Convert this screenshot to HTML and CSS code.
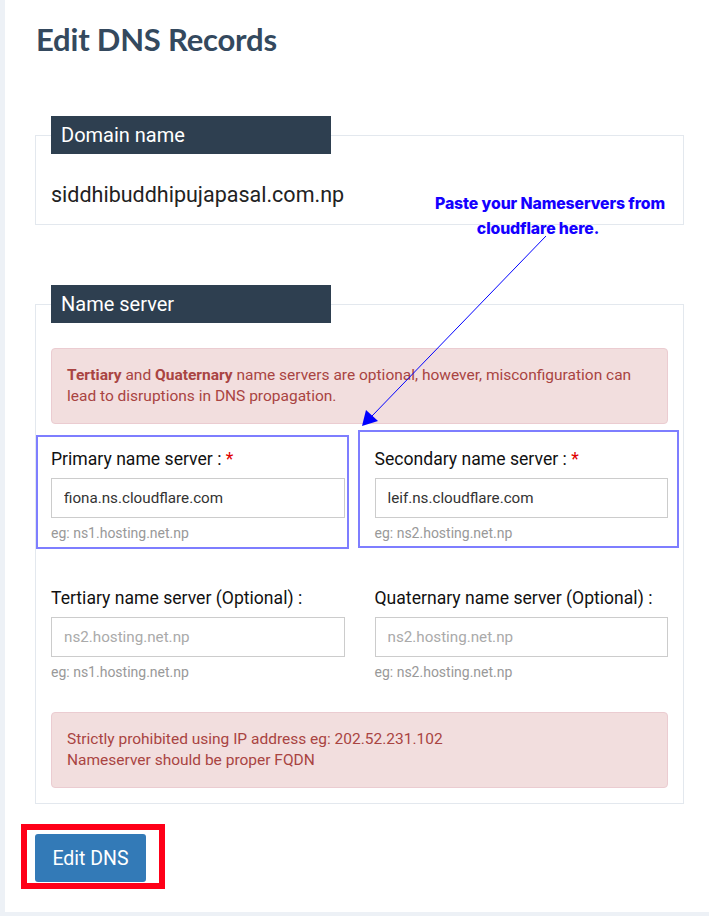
FILE: index.html
```html
<!DOCTYPE html>
<html lang="en">
<head>
<meta charset="utf-8">
<title>Edit DNS Records</title>
<link rel="stylesheet" href="styles.css">
</head>
<body>
<div class="page">
  <h1 class="title">Edit DNS Records</h1>

  <fieldset class="box box-domain">
    <legend class="box-legend">Domain name</legend>
    <div class="domain-value">siddhibuddhipujapasal.com.np</div>
  </fieldset>

  <fieldset class="box box-ns">
    <legend class="box-legend">Name server</legend>
    <div class="alert">
      <b>Tertiary</b> and <b>Quaternary</b> name servers are optional, however, misconfiguration can lead to disruptions in DNS propagation.
    </div>
    <div class="grid">
      <div class="field field-first">
        <label class="label">Primary name server : <span class="req">*</span></label>
        <input class="input" type="text" value="fiona.ns.cloudflare.com">
        <div class="help">eg: ns1.hosting.net.np</div>
      </div>
      <div class="field field-first">
        <label class="label">Secondary name server : <span class="req">*</span></label>
        <input class="input" type="text" value="leif.ns.cloudflare.com">
        <div class="help">eg: ns2.hosting.net.np</div>
      </div>
      <div class="field">
        <label class="label">Tertiary name server (Optional) :</label>
        <input class="input" type="text" placeholder="ns2.hosting.net.np">
        <div class="help">eg: ns1.hosting.net.np</div>
      </div>
      <div class="field">
        <label class="label">Quaternary name server (Optional) :</label>
        <input class="input" type="text" placeholder="ns2.hosting.net.np">
        <div class="help">eg: ns2.hosting.net.np</div>
      </div>
    </div>
    <div class="alert alert-last">
      Strictly prohibited using IP address eg: 202.52.231.102<br>
      Nameserver should be proper FQDN
    </div>
  </fieldset>

  <div class="actions">
    <button class="btn" type="button">Edit DNS</button>
  </div>

  <!-- annotation overlay -->
  <div class="note">
    <div class="note-line">Paste your Nameservers from</div>
    <div class="note-line note-line2">cloudflare here.</div>
  </div>
  <svg class="arrow" width="709" height="916" viewBox="0 0 709 916">
    <line x1="546" y1="236" x2="372" y2="416" stroke="#0000ff" stroke-width="1"/>
    <polygon points="362,426 366,410 378,421" fill="#0000ff"/>
  </svg>
  <div class="hl hl-primary"></div>
  <div class="hl hl-secondary"></div>
  <div class="hl-red"></div>
</div>
</body>
</html>
```
FILE: styles.css
```css
html, body {
  margin: 0;
  padding: 0;
}
body {
  background: #edf1f6;
  font-family: Roboto, "Liberation Sans", Arial, sans-serif;
  color: #222;
}
.page {
  position: relative;
  margin-left: 5px;
  height: 912px;
  background: #fff;
  padding: 0 25px 0 30px;
  box-sizing: border-box;
  overflow: hidden;
}
.title {
  margin: 0;
  padding: 20px 0 0 1px;
  font-family: Lato, "Open Sans", sans-serif;
  font-weight: 700;
  font-size: 31px;
  line-height: 38px;
  color: #34495e;
  letter-spacing: -0.2px;
}
.box {
  margin: 0;
  border: 1px solid #e3e8ee;
  padding: 0 15px 15px;
  min-width: 0;
}
.box-domain {
  margin-top: 58px;
}
.box-ns {
  margin-top: 60px;
}
.box-legend {
  width: 280px;
  box-sizing: border-box;
  padding: 0 10px;
  margin: 0;
  background: #2e3f50;
  color: #fff;
  font-size: 20px;
  line-height: 38px;
  height: 38px;
}
.domain-value {
  margin-top: 26px;
  font-size: 21.5px;
  line-height: 29px;
  color: #222;
}
.alert {
  margin-top: 25px;
  padding: 16px 15px;
  background: #f2dede;
  border: 1px solid #ebccd1;
  border-radius: 4px;
  color: #a94442;
  font-size: 15.5px;
  line-height: 21px;
}
.alert b {
  font-weight: 700;
}
.alert-last {
  margin-top: 30px;
}
.grid {
  display: grid;
  grid-template-columns: 1fr 1fr;
  column-gap: 30px;
  margin-top: 23px;
}
.field-first {
  margin-bottom: 43px;
}
.label {
  display: block;
  font-size: 17.6px;
  line-height: 24px;
  color: #111;
  margin-bottom: 7px;
}
.req {
  color: #e00000;
}
.input {
  display: block;
  width: 100%;
  box-sizing: border-box;
  height: 40px;
  border: 1px solid #cccccc;
  border-radius: 0;
  padding: 0 12px;
  font-family: Roboto, "Liberation Sans", Arial, sans-serif;
  font-size: 15.2px;
  color: #333;
  background: #fff;
  outline: none;
}
.input::placeholder {
  color: #aaa;
}
.help {
  margin-top: 5px;
  font-size: 14px;
  line-height: 20px;
  color: #999;
}
.actions {
  margin-top: 30px;
}
.btn {
  width: 111px;
  height: 48px;
  border: 0;
  border-radius: 3px;
  background: #337ab7;
  color: #fff;
  font-family: Roboto, "Liberation Sans", Arial, sans-serif;
  font-size: 19.5px;
  padding: 0;
}

/* annotation overlays */
.note {
  position: absolute;
  left: 405px;
  top: 191px;
  width: 280px;
  text-align: center;
  font-family: Inter, "Liberation Sans", sans-serif;
  font-weight: 800;
  font-size: 15.8px;
  line-height: 25px;
  color: #1400ff;
  letter-spacing: -0.1px;
}
.note-line2 {
  padding-right: 24px;
}
.arrow {
  position: absolute;
  left: -5px;
  top: 0;
  pointer-events: none;
}
.hl {
  position: absolute;
  border: 2px solid #7e7eff;
  box-sizing: border-box;
}
.hl-primary {
  left: 31px;
  top: 435px;
  width: 313px;
  height: 114px;
}
.hl-secondary {
  left: 353px;
  top: 430px;
  width: 321px;
  height: 118px;
}
.hl-red {
  position: absolute;
  left: 16px;
  top: 824px;
  width: 144px;
  height: 65px;
  border: 6px solid #ff0018;
  box-sizing: border-box;
}
```
